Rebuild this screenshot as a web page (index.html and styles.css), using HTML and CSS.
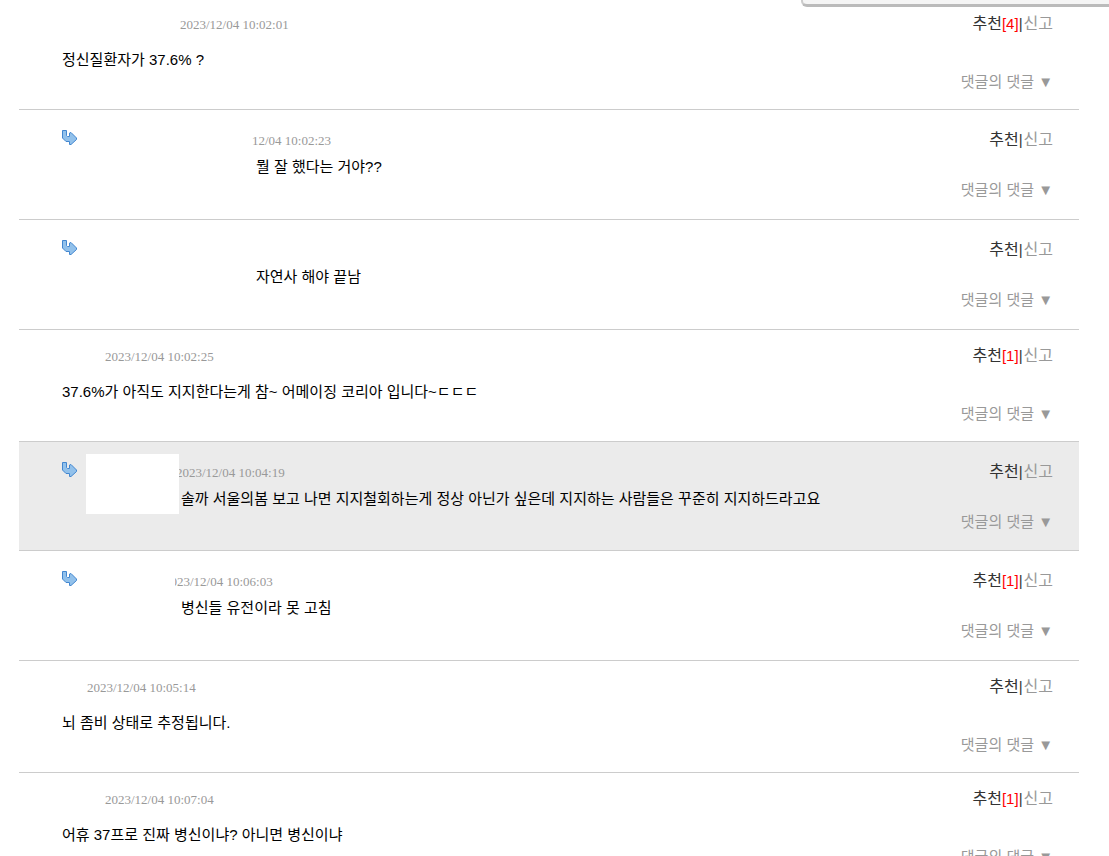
FILE: index.html
```html
<!DOCTYPE html>
<html lang="ko">

<head>
    <meta charset="UTF-8" />
    <meta name="viewport" content="width=device-width, initial-scale=1.0" />
    <title>댓글</title>
    <link rel="stylesheet" href="styles.css">
</head>

<body>

    <svg class="defs" width="0" height="0">
        <symbol id="arrow" viewBox="0 0 16 16">
            <path d="M0.5 0.5H4.5V5.5L5.5 6.5H7.5V3L9 2.5L14.5 8V9.5L9 14.5H7.5V11.5H4L0.5 8Z" fill="#92c1eb" stroke="#4387d0" />
        </symbol>
    </svg>

    <div class="side-panel"></div>

    <ul class="comments">
        <li class="comment first">
            <div class="main">
                <div class="info"><span class="nick nick-long"></span><span class="date">2023/12/04 10:02:01</span></div>
                <p class="text">정신질환자가 37.6% ?</p>
            </div>
            <div class="tools">
                <div class="votes"><a class="up" href="#">추천</a><span class="count">[4]</span><span class="bar">|</span><a href="#">신고</a></div>
                <button class="more" type="button">댓글의 댓글 ▼</button>
            </div>
        </li>

        <li class="comment reply deep">
            <svg class="icon" width="16" height="16"><use href="#arrow" /></svg>
            <div class="main">
                <div class="info"><span class="date">12/04 10:02:23</span></div>
                <p class="text">뭘 잘 했다는 거야??</p>
            </div>
            <div class="tools">
                <div class="votes"><a class="up" href="#">추천</a><span class="bar">|</span><a href="#">신고</a></div>
                <button class="more" type="button">댓글의 댓글 ▼</button>
            </div>
        </li>

        <li class="comment reply deep">
            <svg class="icon" width="16" height="16"><use href="#arrow" /></svg>
            <div class="main">
                <div class="info"></div>
                <p class="text">자연사 해야 끝남</p>
            </div>
            <div class="tools">
                <div class="votes"><a class="up" href="#">추천</a><span class="bar">|</span><a href="#">신고</a></div>
                <button class="more" type="button">댓글의 댓글 ▼</button>
            </div>
        </li>

        <li class="comment">
            <div class="main">
                <div class="info"><span class="nick"></span><span class="date">2023/12/04 10:02:25</span></div>
                <p class="text">37.6%가 아직도 지지한다는게 참~ 어메이징 코리아 입니다~ㄷㄷㄷ</p>
            </div>
            <div class="tools">
                <div class="votes"><a class="up" href="#">추천</a><span class="count">[1]</span><span class="bar">|</span><a href="#">신고</a></div>
                <button class="more" type="button">댓글의 댓글 ▼</button>
            </div>
        </li>

        <li class="comment reply selected">
            <svg class="icon" width="16" height="16"><use href="#arrow" /></svg>
            <div class="main">
                <div class="info"><span class="nick nick-wide"></span><span class="date">2023/12/04 10:04:19</span></div>
                <p class="text">솔까 서울의봄 보고 나면 지지철회하는게 정상 아닌가 싶은데 지지하는 사람들은 꾸준히 지지하드라고요</p>
                <div class="cover"></div>
            </div>
            <div class="tools">
                <div class="votes"><a class="up" href="#">추천</a><span class="bar">|</span><a href="#">신고</a></div>
                <button class="more" type="button">댓글의 댓글 ▼</button>
            </div>
        </li>

        <li class="comment reply">
            <svg class="icon" width="16" height="16"><use href="#arrow" /></svg>
            <div class="main">
                <div class="info"><span class="nick nick-mid"></span><span class="date">2023/12/04 10:06:03</span></div>
                <p class="text">병신들 유전이라 못 고침</p>
                <div class="cover narrow"></div>
            </div>
            <div class="tools">
                <div class="votes"><a class="up" href="#">추천</a><span class="count">[1]</span><span class="bar">|</span><a href="#">신고</a></div>
                <button class="more" type="button">댓글의 댓글 ▼</button>
            </div>
        </li>

        <li class="comment">
            <div class="main">
                <div class="info"><span class="nick nick-short"></span><span class="date">2023/12/04 10:05:14</span></div>
                <p class="text">뇌 좀비 상태로 추정됩니다.</p>
            </div>
            <div class="tools">
                <div class="votes"><a class="up" href="#">추천</a><span class="bar">|</span><a href="#">신고</a></div>
                <button class="more" type="button">댓글의 댓글 ▼</button>
            </div>
        </li>

        <li class="comment">
            <div class="main">
                <div class="info"><span class="nick"></span><span class="date">2023/12/04 10:07:04</span></div>
                <p class="text">어휴 37프로 진짜 병신이냐? 아니면 병신이냐</p>
            </div>
            <div class="tools">
                <div class="votes"><a class="up" href="#">추천</a><span class="count">[1]</span><span class="bar">|</span><a href="#">신고</a></div>
                <button class="more" type="button">댓글의 댓글 ▼</button>
            </div>
        </li>
    </ul>

</body>

</html>
```
FILE: styles.css
```css
* {
    box-sizing: border-box;
}

html,
body {
    height: 100%;
    overflow: hidden;
}

body {
    margin: 0;
    background: #fff;
    color: #000;
    font-family: "Liberation Sans", "Noto Sans CJK KR", sans-serif;
    font-size: 15px;
    line-height: 20px;
}

.defs {
    position: absolute;
}

/* bottom edge of the floating panel */
.side-panel {
    position: absolute;
    top: 0;
    right: 0;
    width: 308px;
    height: 7px;
    background: #f5f5f5;
    border-left: 2px solid #ccc;
    border-bottom: 3px solid #bbb;
    border-bottom-left-radius: 6px;
}

.comments {
    list-style: none;
    margin: 0 30px 0 19px;
    padding: 0;
}

.comment {
    display: flex;
    height: 112px;
    padding: 16px 26px 0 43px;
    border-bottom: 1px solid #ccc;
}

.comment.first {
    height: 110px;
    padding-top: 14px;
}

.main {
    flex: 1;
    position: relative;
}

.info {
    display: flex;
    height: 22px;
    align-items: center;
}

.nick {
    width: 43px;
}

.nick-short {
    width: 25px;
}

.nick-long {
    width: 118px;
}

.date {
    color: #999;
    font-family: "Liberation Serif", serif;
    font-size: 13px;
}

.text {
    margin: 14px 0 0;
}

.tools {
    display: flex;
    flex-direction: column;
    align-items: flex-end;
    justify-content: space-between;
    height: 78px;
}

.votes {
    display: flex;
    color: #333;
}

.votes a {
    margin-left: 1px;
    color: #999;
    font-size: 16px;
    text-decoration: none;
}

.votes .up {
    color: #333;
}

.count {
    color: red;
}

.more {
    padding: 0;
    border: 0;
    background: none;
    color: #999;
    font: inherit;
    cursor: pointer;
}

/* replies */
.reply {
    height: 110px;
    padding-top: 20px;
}

.reply .main {
    margin-left: 8px;
}

.reply .text {
    margin: 5px 0 0 95px;
}

.reply .tools {
    height: 70px;
}

.reply.deep .main {
    margin-left: 174px;
}

.reply.deep .text {
    margin-left: 4px;
}

.nick-wide {
    width: 90px;
}

.nick-mid {
    width: 78px;
}

.reply.selected {
    height: 109px;
    background: #ebebeb;
}

.cover {
    position: absolute;
    top: -8px;
    left: 0;
    width: 93px;
    height: 60px;
    background: #fff;
}

.cover.narrow {
    width: 89px;
}
```
